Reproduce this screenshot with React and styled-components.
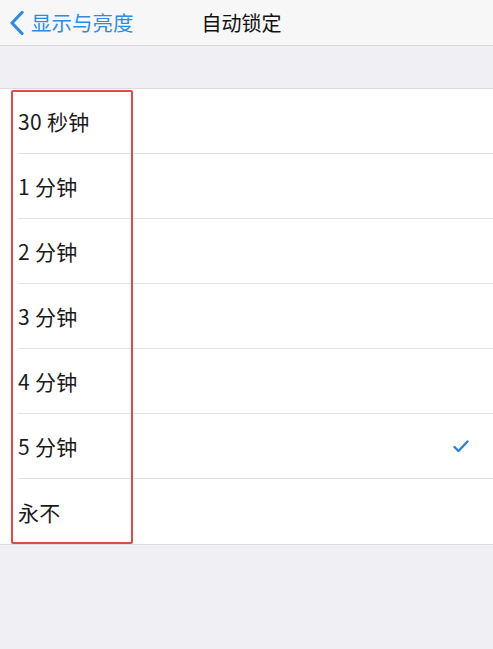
import styled, { createGlobalStyle } from "styled-components"

const Global = createGlobalStyle`
  body {
    margin: 0;
    background: #efeff4;
    font-family: "Noto Sans CJK SC", "Noto Sans", sans-serif;
  }
`

const Page = styled.div`
  width: 493px;
  height: 649px;
  background: #efeff4;
  display: flex;
  flex-direction: column;
  overflow: hidden;
`

const NavBar = styled.div`
  height: 46px;
  background: #f7f7f8;
  border-bottom: 1px solid #d9d9dc;
  display: grid;
  grid-template-columns: 1fr auto 1fr;
  align-items: center;
  box-sizing: border-box;
`

const Back = styled.div`
  display: flex;
  align-items: center;
  gap: 6px;
  padding-left: 9px;
  color: #2f8ae4;
  font-size: 20.5px;
  line-height: 1;
`

const Title = styled.div`
  font-size: 20px;
  color: #111;
  font-weight: 400;
  margin-right: 10px;
`

const Spacer = styled.div`
  height: 42px;
`

const List = styled.div`
  position: relative;
  background: #fff;
  border-top: 1px solid #dcdce0;
  border-bottom: 1px solid #dcdce0;
`

const Row = styled.div`
  margin-left: 18px;
  padding-right: 24px;
  display: flex;
  align-items: center;
  justify-content: space-between;
  font-size: 21px;
  color: #1a1a1a;
  border-bottom: ${p => (p.last ? "none" : "1px solid #e3e3e6")};
  box-sizing: border-box;
  height: 65px;
`

const Label = styled.span`
  letter-spacing: 0.3px;
`

const Highlight = styled.div`
  position: absolute;
  left: 11px;
  top: 1px;
  width: 122px;
  bottom: 0;
  border: 2px solid #e34a45;
  border-radius: 2px;
  box-sizing: border-box;
  pointer-events: none;
`

const options = ["30 秒钟", "1 分钟", "2 分钟", "3 分钟", "4 分钟", "5 分钟", "永不"]

export default function App() {
  return (
    <Page>
      <Global />
      <NavBar>
        <Back>
          <svg width="16" height="24" viewBox="0 0 16 24">
            <path d="M13 1.5 L3 12 L13 22.5" fill="none" stroke="#2f8ae4" strokeWidth="3.2" strokeLinecap="round" strokeLinejoin="round" />
          </svg>
          <span>显示与亮度</span>
        </Back>
        <Title>自动锁定</Title>
        <div />
      </NavBar>
      <Spacer />
      <List>
        {options.map((o, i) => (
          <Row key={o} last={i === options.length - 1}>
            <Label>{o}</Label>
            {o === "5 分钟" && (
              <svg width="16" height="13" viewBox="0 0 16 13">
                <path d="M1.5 7 L5.5 11 L14.5 1.5" fill="none" stroke="#2d7fd6" strokeWidth="2.4" strokeLinecap="round" strokeLinejoin="round" />
              </svg>
            )}
          </Row>
        ))}
        <Highlight />
      </List>
    </Page>
  )
}
